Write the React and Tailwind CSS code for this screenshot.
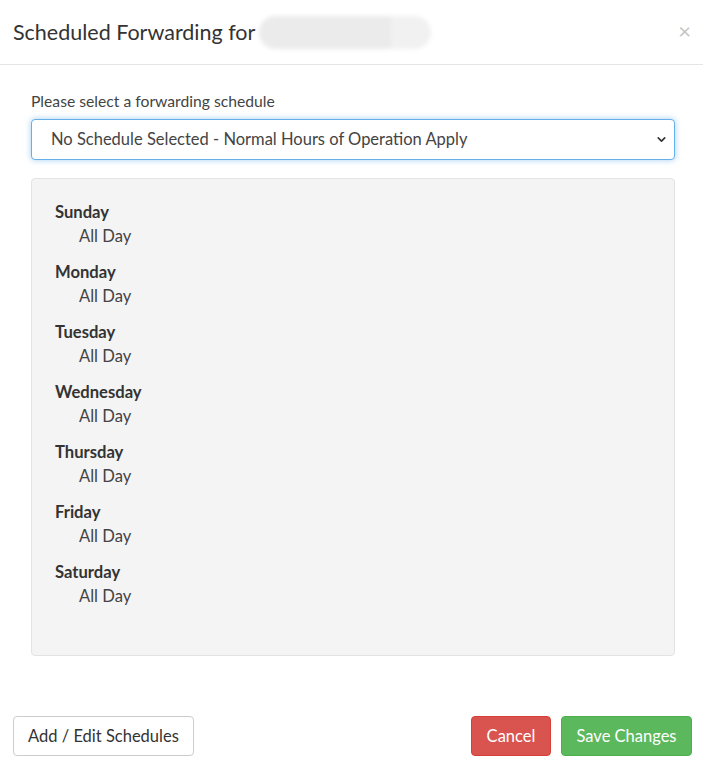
import { ChevronDown } from 'lucide-react';

const days = ['Sunday', 'Monday', 'Tuesday', 'Wednesday', 'Thursday', 'Friday', 'Saturday'];

const App = () => {
  return (
    <div className="w-[703px] h-[761px] bg-white text-[#333] font-['Lato','Noto_Sans',sans-serif] flex flex-col">
      {/* nagłówek */}
      <div className="h-[65px] border-b border-[#e5e5e5] flex items-center justify-between pl-[13px] pr-[12px]">
        <div className="flex items-center">
          <span className="text-[21.5px] leading-[28px] text-[#333]">Scheduled Forwarding for</span>
          <div className="ml-[4px] flex h-[33px] w-[172px] rounded-full overflow-hidden blur-[2px]">
            <div className="w-[132px] bg-[#ebebeb]"></div>
            <div className="flex-1 bg-[#f1f1f1]"></div>
          </div>
        </div>
        <span className="text-[22px] leading-none text-[#c4c4c4] -mt-[2px]">×</span>
      </div>

      {/* treść */}
      <div className="pl-[31px] pr-[28px] pt-[26px]">
        <label className="block text-[15.7px] leading-[21px] text-[#444]">Please select a forwarding schedule</label>
        <div className="relative mt-[7px]">
          <select
            className="appearance-none w-full h-[41px] border border-[#66afe9] rounded-[4px] pl-[19px] pr-8 text-[16.5px] text-[#444] bg-white shadow-[0_0_6px_rgba(102,175,233,0.6)] outline-none font-['Lato',sans-serif]"
            defaultValue="none"
          >
            <option value="none">No Schedule Selected - Normal Hours of Operation Apply</option>
          </select>
          <ChevronDown className="absolute right-[7px] top-[14px] w-[13px] h-[13px] text-[#333] pointer-events-none" strokeWidth={3} />
        </div>

        <div className="mt-[18px] h-[478px] bg-[#f4f4f4] border border-[#e3e3e3] rounded-[4px] pl-[23px] pt-[21px]">
          {days.map((d) => (
            <div key={d} className="mb-[12px]">
              <div className="text-[16.6px] leading-[24px] font-bold text-[#333]">{d}</div>
              <div className="pl-[24px] text-[16.6px] leading-[24px] text-[#444]">All Day</div>
            </div>
          ))}
        </div>
      </div>

      {/* stopka */}
      <div className="mt-[60px] flex items-center justify-between pl-[13px] pr-[11px]">
        <button className="h-[40px] px-[14px] border border-[#ccc] rounded-[4px] bg-white text-[16.5px] text-[#333]">
          Add / Edit Schedules
        </button>
        <div className="flex gap-[10px]">
          <button className="h-[40px] w-[80px] rounded-[4px] bg-[#d9534f] border border-[#d43f3a] text-[16.5px] text-white">
            Cancel
          </button>
          <button className="h-[40px] w-[131px] rounded-[4px] bg-[#5cb85c] border border-[#4cae4c] text-[16.5px] text-white">
            Save Changes
          </button>
        </div>
      </div>
    </div>
  );
};

export default App;
